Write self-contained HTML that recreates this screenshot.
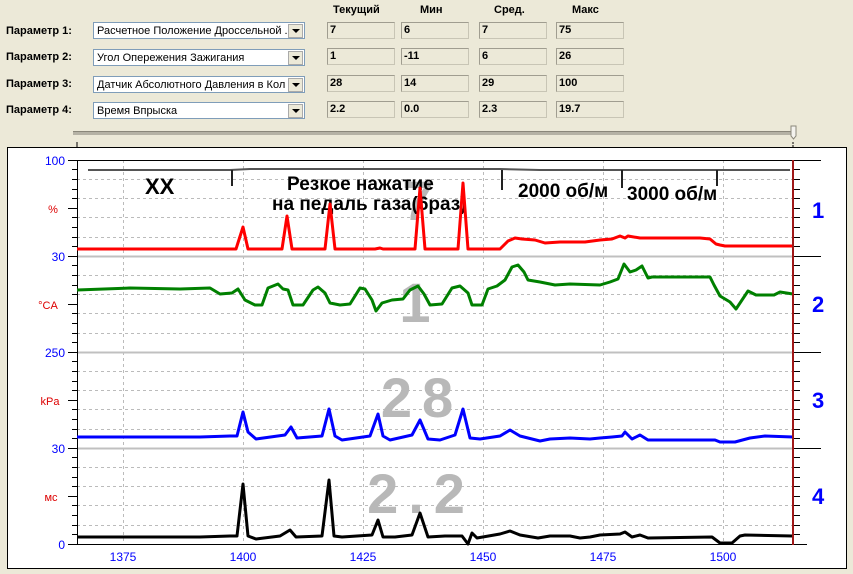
<!DOCTYPE html><html><head><meta charset="utf-8"><style>
body{margin:0;width:853px;height:574px;background:#ECE9D8;font-family:"Liberation Sans",sans-serif;position:relative;overflow:hidden}
.l{position:absolute;font-size:11px;font-weight:bold;color:#000}
.cb{position:absolute;left:93px;width:212px;height:17px;background:#fff;border:1px solid #7F9DB9;font-size:11px;line-height:17px;padding-left:3px;box-sizing:border-box;white-space:nowrap;overflow:hidden}
.cb b{position:absolute;right:1px;top:1px;width:15px;height:14px;background:#ECE9D8;border:1px solid #aaa;box-sizing:border-box}
.cb b:after{content:"";position:absolute;left:3px;top:4px;border:4px solid transparent;border-top:4px solid #000}
.v{position:absolute;width:68px;height:17px;border:1px solid #c8c5b5;border-top-color:#a09d90;border-left-color:#a09d90;box-sizing:border-box;font-size:11px;font-weight:bold;line-height:15px;padding-left:2px}
.h{position:absolute;top:4px;font-size:11px;font-weight:bold}
</style></head><body>
<div class="h" style="left:333px">Текущий</div><div class="h" style="left:420px">Мин</div><div class="h" style="left:494px">Сред.</div><div class="h" style="left:572px">Макс</div>
<div class="l" style="left:6px;top:25px">Параметр 1:</div>
<div class="l" style="left:6px;top:51px">Параметр 2:</div>
<div class="l" style="left:6px;top:78px">Параметр 3:</div>
<div class="l" style="left:6px;top:104px">Параметр 4:</div>
<div class="cb" style="top:22px">Расчетное Положение Дроссельной .<b></b></div>
<div class="cb" style="top:49px">Угол Опережения Зажигания<b></b></div>
<div class="cb" style="top:76px">Датчик Абсолютного Давления в Кол<b></b></div>
<div class="cb" style="top:102px">Время Впрыска<b></b></div>
<div class="v" style="left:327px;top:22px">7</div><div class="v" style="left:401px;top:22px">6</div><div class="v" style="left:479px;top:22px">7</div><div class="v" style="left:556px;top:22px">75</div>
<div class="v" style="left:327px;top:48px">1</div><div class="v" style="left:401px;top:48px">-11</div><div class="v" style="left:479px;top:48px">6</div><div class="v" style="left:556px;top:48px">26</div>
<div class="v" style="left:327px;top:75px">28</div><div class="v" style="left:401px;top:75px">14</div><div class="v" style="left:479px;top:75px">29</div><div class="v" style="left:556px;top:75px">100</div>
<div class="v" style="left:327px;top:101px">2.2</div><div class="v" style="left:401px;top:101px">0.0</div><div class="v" style="left:479px;top:101px">2.3</div><div class="v" style="left:556px;top:101px">19.7</div>
<svg width="853" height="574" style="position:absolute;left:0;top:0" font-family="Liberation Sans, sans-serif">
<rect x="73" y="131" width="722" height="4" fill="#b5b2a5"/><rect x="73" y="131" width="722" height="1" fill="#8a877a"/>
<path d="M791 126h5v10l-2.5 3l-2.5-3z" fill="#f4f3ee" stroke="#8a877a"/>
<line x1="77" y1="142" x2="77" y2="147" stroke="#000"/><line x1="793" y1="142" x2="793" y2="147" stroke="#000" stroke-dasharray="2,1"/>
<rect x="7.5" y="147.5" width="839" height="421" fill="#fff" stroke="#000"/>
<g stroke="#bbb" stroke-dasharray="3,3" stroke-width="1">
<path d="M123.5 160V544M243.5 160V544M363.5 160V544M483.5 160V544M603.5 160V544M723.5 160V544"/>
<path d="M77 179.5H793M77 198.5H793M77 217.5H793M77 237.5H793M77 275.5H793M77 294.5H793M77 313.5H793M77 333.5H793M77 371.5H793M77 390.5H793M77 409.5H793M77 429.5H793M77 467.5H793M77 486.5H793M77 505.5H793M77 525.5H793"/>
</g>
<path d="M77 256.5H793M77 352.5H793M77 448.5H793" stroke="#c0c0c0" stroke-width="2"/>
<path d="M77 160.5H793M77.5 160V544.5H793" stroke="#000" fill="none"/>
<g stroke="#000">
<path d="M68 160.5h9M68 256.5h9M68 352.5h9M68 448.5h9M68 544.5h9M68 208.5h9M68 304.5h9M68 400.5h9M68 496.5h9"/>
<path d="M72 169.5h5M72 179.5h5M72 189.5h5M72 198.5h5M72 217.5h5M72 227.5h5M72 237.5h5M72 246.5h5M72 265.5h5M72 275.5h5M72 285.5h5M72 294.5h5M72 313.5h5M72 323.5h5M72 333.5h5M72 342.5h5M72 361.5h5M72 371.5h5M72 381.5h5M72 390.5h5M72 409.5h5M72 419.5h5M72 429.5h5M72 438.5h5M72 457.5h5M72 467.5h5M72 477.5h5M72 486.5h5M72 505.5h5M72 515.5h5M72 525.5h5M72 534.5h5"/>
<path d="M793 160.5h28M793 256.5h28M793 352.5h28M793 448.5h28M793 544.5h14"/>
<path d="M793 169.5h7M793 179.5h7M793 189.5h7M793 198.5h7M793 208.5h7M793 217.5h7M793 227.5h7M793 237.5h7M793 246.5h7M793 265.5h7M793 275.5h7M793 285.5h7M793 294.5h7M793 304.5h7M793 313.5h7M793 323.5h7M793 333.5h7M793 342.5h7M793 361.5h7M793 371.5h7M793 381.5h7M793 390.5h7M793 400.5h7M793 409.5h7M793 419.5h7M793 429.5h7M793 438.5h7M793 457.5h7M793 467.5h7M793 477.5h7M793 486.5h7M793 496.5h7M793 505.5h7M793 515.5h7M793 525.5h7M793 534.5h7"/>
</g>
<g font-size="12" fill="#0000ff" text-anchor="end"><text x="65" y="165">100</text><text x="65" y="261">30</text><text x="65" y="357">250</text><text x="65" y="453">30</text><text x="65" y="549">0</text></g>
<g font-size="11" fill="#dd0000" text-anchor="middle"><text x="53" y="213">%</text><text x="48" y="309">°CA</text><text x="50" y="405">kPa</text><text x="51" y="501">мс</text></g>
<g font-size="12" fill="#0000ff" text-anchor="middle"><text x="123" y="561">1375</text><text x="243" y="561">1400</text><text x="363" y="561">1425</text><text x="483" y="561">1450</text><text x="603" y="561">1475</text><text x="723" y="561">1500</text></g>
<g font-size="22" font-weight="bold" fill="#0000ff"><text x="812" y="218">1</text><text x="812" y="312">2</text><text x="812" y="408">3</text><text x="812" y="504">4</text></g>
<g font-size="56" font-weight="bold" fill="#b8b8b8" text-anchor="middle" letter-spacing="10"><text x="423" y="220">7</text><text x="420" y="322">1</text><text x="422" y="417">28</text><text x="421" y="513">2.2</text></g>
<path d="M88 170H230l20 -1H500l40 1H790" stroke="#555" stroke-width="2" fill="none"/>
<path d="M232 170v16M502 170v20M622 170v18M717 170v16" stroke="#222" stroke-width="2"/>
<g font-weight="bold" fill="#000"><text x="145" y="194" font-size="22">XX</text><text x="287" y="190" font-size="19">Резкое нажатие</text><text x="272" y="210" font-size="19">на педаль газа(6раз)</text><text x="518" y="197" font-size="19">2000 об/м</text><text x="627" y="200" font-size="19">3000 об/м</text></g>
<g fill="none" stroke-width="3" stroke-linejoin="round">
<polyline stroke="#ff0000" points="77,249 230,249 236,249 243,227 248,249 282,249 287,216 292,249 325,249 330,204 335,249 375,249 380,248 383,249 415,249 420,188 425,249 458,249 463,183 468,249 500,249 508,241 515,238 522,239 535,240 545,243 560,242 585,242 600,240 612,239 620,236 625,238 628,236 640,238 700,238 710,239 716,244 720,245 725,246 793,246"/>
<polyline stroke="#008000" points="77,290 130,288 180,289 210,288 220,294 232,293 238,289 245,300 255,305 262,305 268,288 278,284 283,289 288,290 293,305 303,305 313,290 318,287 325,293 330,303 340,305 350,304 360,288 365,289 372,300 376,311 382,303 392,300 403,299 410,290 418,286 424,294 430,305 442,304 452,288 460,286 468,293 472,305 482,305 488,289 497,286 505,280 512,267 518,265 524,272 528,280 540,282 555,285 570,284 600,285 610,282 618,279 624,264 630,272 636,270 642,266 648,278 652,277 710,277 714,285 720,296 730,302 736,309 742,300 748,291 756,295 774,295 780,292 793,294"/>
<polyline stroke="#0000ff" points="77,437 200,437 230,436 237,436 243,412 248,432 256,439 285,435 291,427 297,438 322,436 329,409 335,436 342,440 370,436 378,414 383,436 390,440 412,435 420,420 428,439 440,440 455,435 463,409 470,438 480,439 500,436 510,430 520,436 540,441 550,439 570,438 590,439 600,438 612,437 622,436 625,432 632,439 640,435 648,440 715,440 720,442 735,442 750,438 765,436 793,437"/>
<polyline stroke="#000000" points="77,537 200,537 230,536 237,536 243,484 248,536 256,539 280,536 290,530 296,537 322,536 329,480 334,536 342,537 372,535 378,520 383,537 395,537 412,535 420,513 428,537 445,536 462,536 468,544 472,533 477,538 500,534 510,531 520,535 538,538 550,536 570,536 580,538 590,537 600,535 620,534 625,532 632,537 640,535 648,538 712,537 720,543 732,543 740,536 745,535 793,536"/>
</g>
<line x1="793" y1="160" x2="793" y2="545" stroke="#a01818" stroke-width="2"/>
</svg>
</body></html>
